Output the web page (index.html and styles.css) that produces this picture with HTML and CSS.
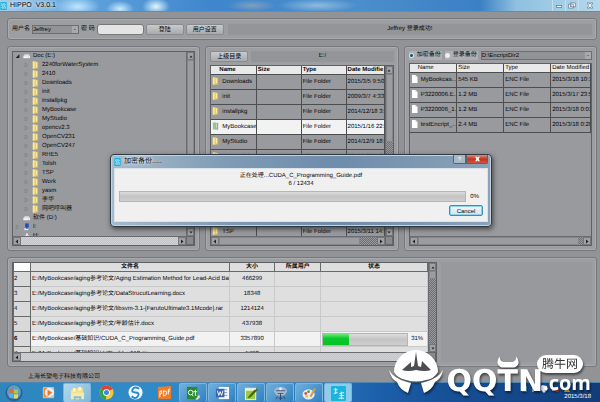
FILE: index.html
```
<!DOCTYPE html>
<html lang="zh-CN">
<head>
<meta charset="utf-8">
<title>HIPPO V3.0.1</title>
<link rel="stylesheet" href="styles.css">
</head>
<body>
<svg class="defs" aria-hidden="true">
  <defs>
    <symbol id="app" viewBox="0 0 16 20"><rect width="16" height="20" rx="2" fill="#1cb3dc"/><path d="M4 3v6l3 2v6M12 17v-6L9 9V3M3 13l2 3M13 7l-2-3" fill="none" stroke="#e9fbff" stroke-width="2"/></symbol>
    <symbol id="folder" viewBox="0 0 14 18"><path d="M1 1h7v16H1z" fill="#f0d97a"/><path d="M7 2h6v15H7z" fill="#e2c04e"/><path d="M8 1v12l2 3V4z" fill="#fff3b8"/><path d="M1 1h3v16H1z" fill="#f7e9a4"/></symbol>
    <symbol id="folder-on" viewBox="0 0 14 18"><path d="M1 1h7v16H1z" fill="#9cc3a0"/><path d="M7 2h6v15H7z" fill="#86ae8b"/><path d="M8 1v12l2 3V4z" fill="#c8e2c9"/></symbol>
    <symbol id="file" viewBox="0 0 12 16"><path d="M1 0h7l4 4v12H1z" fill="#fff"/><path d="M8 0v4h4" fill="#d5d7db"/></symbol>
    <symbol id="drive" viewBox="0 0 16 12"><path d="M1 6l3-4h9l3 4v4H1z" fill="#dcdee0"/><path d="M1 7h15v4H1z" fill="#f4f5f6"/><circle cx="13" cy="9" r="1" fill="#6f8f74"/></symbol>
    <symbol id="arrow" viewBox="0 0 8 8"><path d="M2 1l4 3-4 3z" fill="#a9aaad" stroke="#707276"/></symbol>
    <symbol id="arrow-open" viewBox="0 0 8 8"><path d="M7 1v6H1z" fill="#222"/></symbol>
    <symbol id="up" viewBox="0 0 8 8"><path d="M1 6l3-4 3 4z"/></symbol>
    <symbol id="down" viewBox="0 0 8 8"><path d="M1 2l3 4 3-4z"/></symbol>
    <symbol id="left" viewBox="0 0 8 8"><path d="M6 0L1 4l5 4z"/></symbol>
    <symbol id="right" viewBox="0 0 8 8"><path d="M2 0l5 4-5 4z"/></symbol>
  </defs>
</svg>

<header class="titlebar">
  <svg class="app-icon"><use href="#app"/></svg>
  <span class="caption">HIPPO&nbsp; V3.0.1</span>
  <div class="window-buttons">
    <button aria-label="最小化"><svg viewBox="0 0 12 10"><rect x="2" y="5" width="8" height="3" fill="#fff" stroke="#566b80"/></svg></button>
    <button aria-label="还原"><svg viewBox="0 0 12 10"><path d="M4 1h7v6H4zM1 3h7v6H1z" fill="#fff" stroke="#566b80"/><path d="M3 6h3" stroke="#566b80"/></svg></button>
    <button aria-label="关闭" class="wide"><svg viewBox="0 0 12 10"><path d="M2 1h3l1 2 1-2h3L8 5l2 4H7L6 7 5 9H2l2-4z" fill="#fff" stroke="#566b80"/></svg></button>
  </div>
</header>

<main class="window">
  <section class="panel toolbar">
    <label for="user">用户名</label>
    <select id="user" class="user"><option>Jeffrey</option></select>
    <label for="pwd">密 码</label>
    <input id="pwd" type="password">
    <button class="btn wide-btn">登陆</button>
    <button class="btn wide-btn">用户设置</button>
    <output class="well">Jeffrey 登录成功!</output>
  </section>

  <div class="columns">
    <section class="panel">
      <div class="pane">
        <ul class="tree">
          <li><svg class="tw"><use href="#arrow-open"/></svg><svg class="ic"><use href="#drive"/></svg>Doc (E:)
            <ul>
              <li><svg class="tw"><use href="#arrow"/></svg><svg class="ic"><use href="#folder"/></svg>2240forWaterSystem</li>
              <li><svg class="tw"><use href="#arrow"/></svg><svg class="ic"><use href="#folder"/></svg>2410</li>
              <li><svg class="tw"><use href="#arrow"/></svg><svg class="ic"><use href="#folder"/></svg>Downloads</li>
              <li><svg class="tw"><use href="#arrow"/></svg><svg class="ic"><use href="#folder"/></svg>init</li>
              <li><svg class="tw"><use href="#arrow"/></svg><svg class="ic"><use href="#folder"/></svg>installpkg</li>
              <li><svg class="tw"><use href="#arrow"/></svg><svg class="ic"><use href="#folder"/></svg>MyBookcase</li>
              <li><svg class="tw"><use href="#arrow"/></svg><svg class="ic"><use href="#folder"/></svg>MyStudio</li>
              <li><svg class="tw"><use href="#arrow"/></svg><svg class="ic"><use href="#folder"/></svg>opencv2.3</li>
              <li><svg class="tw"><use href="#arrow"/></svg><svg class="ic"><use href="#folder"/></svg>OpenCV231</li>
              <li><svg class="tw"><use href="#arrow"/></svg><svg class="ic"><use href="#folder"/></svg>OpenCV247</li>
              <li><svg class="tw"><use href="#arrow"/></svg><svg class="ic"><use href="#folder"/></svg>RHE5</li>
              <li><svg class="tw"><use href="#arrow"/></svg><svg class="ic"><use href="#folder"/></svg>Tolsh</li>
              <li><svg class="tw"><use href="#arrow"/></svg><svg class="ic"><use href="#folder"/></svg>TSP</li>
              <li><svg class="tw"><use href="#arrow"/></svg><svg class="ic"><use href="#folder"/></svg>Work</li>
              <li><svg class="tw"><use href="#arrow"/></svg><svg class="ic"><use href="#folder"/></svg>yasm</li>
              <li><svg class="tw"><use href="#arrow"/></svg><svg class="ic"><use href="#folder"/></svg>李华</li>
              <li><svg class="tw"><use href="#arrow"/></svg><svg class="ic"><use href="#folder"/></svg>网吧呼叫器</li>
            </ul>
          </li>
          <li><svg class="tw"></svg><svg class="ic"><use href="#drive"/></svg>软件 (D:)</li>
          <li><svg class="tw"><use href="#arrow"/></svg><svg class="ic" viewBox="0 0 14 18"><path d="M4 1h8v9H4z" fill="#1c4fb4"/><path d="M2 12h9v4H2z" fill="#e4e8f0"/><path d="M6 9h4v4H6z" fill="#2b62c9"/></svg>I:</li>
          <li><svg class="tw"></svg><svg class="ic" viewBox="0 0 14 18"><path d="M6 3h4v5h3v9H3V8h3z" fill="#e8e9eb"/></svg>H:</li>
        </ul>
        <div class="vbar"><i><svg><use href="#up"/></svg></i><b></b><i><svg><use href="#down"/></svg></i></div>
        <div class="hbar light"><i><svg><use href="#left"/></svg></i><b></b><i><svg><use href="#right"/></svg></i></div>
        <div class="corner"></div>
      </div>
    </section>

    <section class="panel">
      <div class="row">
        <button class="btn wide-btn">上级目录</button>
        <output class="well">E:/</output>
      </div>
      <div class="pane">
        <div class="view">
          <table class="files bold">
            <thead><tr><th>Name</th><th>Size</th><th>Type</th><th>Date Modifie</th></tr></thead>
            <tbody>
              <tr><td><svg class="ic"><use href="#folder"/></svg>Downloads</td><td></td><td>File Folder</td><td>2015/3/5 9:50</td></tr>
              <tr><td><svg class="ic"><use href="#folder"/></svg>init</td><td></td><td>File Folder</td><td>2009/3/7 4:33</td></tr>
              <tr><td><svg class="ic"><use href="#folder"/></svg>installpkg</td><td></td><td>File Folder</td><td>2014/12/18 3:</td></tr>
              <tr class="on"><td><svg class="ic"><use href="#folder-on"/></svg>MyBookcase</td><td></td><td>File Folder</td><td>2015/1/16 22:</td></tr>
              <tr><td><svg class="ic"><use href="#folder"/></svg>MyStudio</td><td></td><td>File Folder</td><td>2014/12/9 18:</td></tr>
              <tr><td><svg class="ic"><use href="#folder"/></svg>opencv2.3</td><td></td><td>File Folder</td><td>2014/12/9 18:</td></tr>
              <tr><td><svg class="ic"><use href="#folder"/></svg>OpenCV231</td><td></td><td>File Folder</td><td>2014/12/9 18:</td></tr>
              <tr><td><svg class="ic"><use href="#folder"/></svg>OpenCV247</td><td></td><td>File Folder</td><td>2014/12/9 18:</td></tr>
              <tr><td><svg class="ic"><use href="#folder"/></svg>RHE5</td><td></td><td>File Folder</td><td>2014/12/9 18:</td></tr>
              <tr><td><svg class="ic"><use href="#folder"/></svg>Tolsh</td><td></td><td>File Folder</td><td>2014/12/9 18:</td></tr>
              <tr><td><svg class="ic"><use href="#folder"/></svg>TSP</td><td></td><td>File Folder</td><td>2015/3/11 14:</td></tr>
            </tbody>
          </table>
        </div>
        <div class="vbar"><i><svg><use href="#up"/></svg></i><b class="part"></b><i><svg><use href="#down"/></svg></i></div>
        <div class="hbar"><i><svg><use href="#left"/></svg></i><b class="part"></b><i><svg><use href="#right"/></svg></i></div>
        <div class="corner"></div>
      </div>
    </section>

    <section class="panel">
      <div class="row tight">
        <label class="radio"><input type="radio" name="mode" checked>加密备份</label>
        <label class="radio"><input type="radio" name="mode">登录备份</label>
        <select aria-label="目录" class="grow"><option>D:\EncriptDir2</option></select>
      </div>
      <div class="pane single">
        <div class="view">
          <table class="files">
            <thead><tr><th>Name</th><th>Size</th><th>Type</th><th>Date Modified</th></tr></thead>
            <tbody>
              <tr><td><svg class="ic"><use href="#file"/></svg>MyBookcas...</td><td>545 KB</td><td>ENC File</td><td>2015/3/18 10:13.</td></tr>
              <tr><td><svg class="ic"><use href="#file"/></svg>P3220006.E...</td><td>1.2 MB</td><td>ENC File</td><td>2015/3/17 23:53.</td></tr>
              <tr><td><svg class="ic"><use href="#file"/></svg>P3220006_1...</td><td>1.2 MB</td><td>ENC File</td><td>2015/3/18 0:01:2</td></tr>
              <tr><td><svg class="ic"><use href="#file"/></svg>testEncript_...</td><td>2.4 MB</td><td>ENC File</td><td>2015/3/18 0:20:0</td></tr>
            </tbody>
          </table>
        </div>
        <div class="hbar"><i><svg><use href="#left"/></svg></i><b class="most"></b><i><svg><use href="#right"/></svg></i></div>
      </div>
    </section>
  </div>

  <section class="panel queue">
    <div class="pane">
      <div class="view">
        <table class="jobs">
          <thead><tr><th class="n"></th><th class="path">文件名</th><th class="size">大小</th><th class="owner">所属用户</th><th>状态</th></tr></thead>
          <tbody>
            <tr><th>2</th><td>E:/MyBookcase/aging参考论文/Aging Estimation Method for Lead-Acid Batt...</td><td>466299</td><td></td><td></td></tr>
            <tr><th>3</th><td>E:/MyBookcase/aging参考论文/DataStrucutLearning.docx</td><td>18348</td><td></td><td></td></tr>
            <tr><th>4</th><td>E:/MyBookcase/aging参考论文/libsvm-3.1-[FarutoUltimate3.1Mcode].rar</td><td>1214124</td><td></td><td></td></tr>
            <tr><th>5</th><td>E:/MyBookcase/aging参考论文/年龄估计.docx</td><td>437938</td><td></td><td></td></tr>
            <tr class="on"><th>6</th><td>E:/MyBookcase/基础知识/CUDA_C_Programming_Guide.pdf</td><td>3357890</td><td></td><td><div class="meter"><progress value="31" max="100" aria-label="状态"></progress>31%</div></td></tr>
            <tr><th>7</th><td>E:/MyBookcase/基础知识/dd0build_v613.zip</td><td>5793</td><td></td><td></td></tr>
          </tbody>
        </table>
      </div>
      <div class="vbar"><i><svg><use href="#up"/></svg></i><b class="thumb"></b><i><svg><use href="#down"/></svg></i></div>
      <div class="hbar light"><i><svg><use href="#left"/></svg></i><b></b><i><svg><use href="#right"/></svg></i></div>
      <div class="corner"></div>
    </div>
    <div class="blank"></div>
  </section>

  <p class="status">上海长望电子科技有限公司</p>
</main>

<footer class="taskbar">
  <button class="start" aria-label="开始"><svg viewBox="0 0 18 18"><circle cx="9" cy="9" r="8.5" fill="#2d5f8f"/><circle cx="9" cy="8" r="7" fill="#5c9cc8"/><path d="M4 5q2-1 4 0v4q-2-1-4 0z" fill="#e8683a"/><path d="M9 5q2 1 4 0v4q-2 1-4 0z" fill="#9ccc4a"/><path d="M4 10q2-1 4 0v4q-2-1-4 0z" fill="#4fb4ee"/><path d="M9 10q2 1 4 0v4q-2 1-4 0z" fill="#f8d448"/></svg></button>
  <div class="apps">
    <button aria-label="播放器"><svg viewBox="0 0 16 16"><rect x="2" y="2" width="12" height="12" rx="1" fill="#b9c4cc"/><rect x="3" y="3" width="9" height="10" fill="#f08c3c"/><circle cx="9" cy="8" r="5" fill="#e9eef2"/><path d="M7 5l5 3-5 4z" fill="#ee7420"/></svg></button>
    <button class="open pale" aria-label="资源管理器"><svg viewBox="0 0 16 16"><path d="M1 4h5l1-2h7v12H1z" fill="#f4dc84"/><path d="M3 2h3v4H3zM9 1h3v4H9z" fill="#fff6cf"/><path d="M1 7h14v7H1z" fill="#f7e9a6"/><path d="M4 11h8v4h-2v-2H6v2H4z" fill="#7fc0e4"/></svg></button>
    <button aria-label="Chrome"><svg viewBox="0 0 16 16"><circle cx="8" cy="8" r="7.5" fill="#f7c92c"/><path d="M8 8L1.5 4.2A7.500 7.500 0 0 1 14.500 4.300z" fill="#dc4436"/><path d="M8 8l-6.500-3.800A7.500 7.500 0 0 0 7.500 15.500z" fill="#35a250"/><circle cx="8" cy="8" r="3.600" fill="#fff"/><circle cx="8" cy="8" r="2.700" fill="#3d84e0"/></svg></button>
    <button aria-label="浏览器"><svg viewBox="0 0 16 16"><circle cx="8" cy="8" r="7.500" fill="#f3f8fc"/><path d="M12 4Q7 1 5 4.500T8 8t2.500 4T4 12" fill="none" stroke="#2588d2" stroke-width="2"/></svg></button>
    <button aria-label="PDF"><svg viewBox="0 0 16 16"><path d="M1 2l14-1v14H1z" fill="#ee7c2b"/><path d="M3 13V7l2-1v3l-2 1M7 12V6l3 1v3zM12 10V5l2-1M12 7l2-1" fill="none" stroke="#fff"/></svg></button>
    <button class="open" aria-label="Qt"><svg viewBox="0 0 16 16"><path d="M1 1h11v13H1z" fill="#278a2c"/><circle cx="5" cy="7" r="2.500" fill="none" stroke="#fff"/><path d="M6 9l2 2M10 4v6h1M8 6h4" stroke="#fff" fill="none"/><path d="M10 14l4-5 1 3-3 3z" fill="#d9ddd5"/></svg></button>
    <button class="open" aria-label="Word"><svg viewBox="0 0 16 16"><path d="M4 1h11v13H4z" fill="#f4f7fb"/><path d="M6 4h7M6 7h7M6 10h7" stroke="#7c9ccc"/><path d="M1 3h9v9H1z" fill="#3b62ae"/><path d="M2.500 5l1.500 5 1.500-4L7 10l1.500-5" fill="none" stroke="#fff"/></svg></button>
    <button class="open" aria-label="编辑器"><svg viewBox="0 0 16 16"><path d="M1 2h12v13H1z" fill="#f2f5e8"/><path d="M2 5h10v9H2z" fill="#9bcc38"/><path d="M5 11l8-9 2 2-8 8-3 1z" fill="#48621e"/><path d="M1 2h12v2H1z" fill="#e4e9ea"/></svg></button>
    <button class="open" aria-label="工具"><svg viewBox="0 0 16 16"><path d="M1 6q0-5 7-5t7 5l-3 4H4z" fill="#a9b8cc"/><path d="M3 5h10M5 8h6" stroke="#485c80"/><path d="M8 8v7M5 11l-2 3M11 11l2 3M6 13h4" stroke="#36445f" fill="none"/><circle cx="8" cy="3" r="1.500" fill="#eef"/></svg></button>
    <button class="open" aria-label="画图"><svg viewBox="0 0 16 16"><ellipse cx="7" cy="9" rx="6.500" ry="5.500" fill="#e6edf2"/><circle cx="4" cy="8" r="1.500" fill="#e04a3c"/><circle cx="7" cy="6" r="1.500" fill="#48a34c"/><circle cx="5" cy="11" r="1.500" fill="#f0c23c"/><path d="M8 11l5-9 2 1-5 9z" fill="#d89a48"/></svg></button>
    <button class="open active" aria-label="HIPPO"><svg viewBox="0 0 16 16"><rect width="16" height="16" rx="1" fill="#1cb3dc"/><path d="M3 4h4M5 2v6M3 8l4-1M9 8l5-1M11 6v8M8 13h6M9 10h5" stroke="#e9fbff" fill="none"/></svg></button>
  </div>
  <div class="tray">
    <svg viewBox="0 0 50 8"><rect x="1" y="1" width="5" height="6" fill="#34b0d4"/><path d="M12 1v6" stroke="#e8f2fb"/><path d="M21 0l5 1v4l-3 3-3-3V1z" fill="#dfeaf7"/><path d="M31 2h6v4h-6z" fill="#c9d5df"/><circle cx="36" cy="5" r="2" fill="#d53a30"/><path d="M43 7l3-6 3 6z" fill="#ecc444"/></svg>
    <time>2015/3/18</time>
  </div>
</footer>

<div class="dialog" role="dialog" aria-labelledby="dlg-title">
  <div class="dialog-bar">
    <svg class="app-icon"><use href="#app"/></svg>
    <span id="dlg-title" class="caption">加密备份.....</span>
    <div class="dialog-buttons">
      <button aria-label="帮助">?</button>
      <button class="close" aria-label="关闭"><svg viewBox="0 0 12 10"><path d="M2 1h3l1 2 1-2h3L8 5l2 4H7L6 7 5 9H2l2-4z" fill="#fff"/></svg></button>
    </div>
  </div>
  <div class="dialog-body">
    <p>正在处理...CUDA_C_Programming_Guide.pdf<br>6 / 12434</p>
    <div class="meter"><progress value="0" max="100" aria-label="进度"></progress>0%</div>
    <button class="cancel">Cancel</button>
  </div>
</div>

<div class="brand">
  <svg class="emblem" viewBox="0 0 54 46">
    <path d="M5 24a22 22 0 1 1 44 0q-4 7-12 8-10 3-20 0Q8 30 5 24z" fill="#fff"/>
    <path d="M0 22q4 8 18 12l4 1-3 10Q11 42 8 34 2 31 0 22z" fill="#fff"/>
    <path d="M54 22q-4 8-18 12l-4 1 3 10q8-3 11-11 6-3 8-12z" fill="#fff"/>
    <path d="M27 4l2 14 3 1 1-6 9 9q-6 2-15 0-8 2-14 0l9-8v5l3-1z" fill="#4c4d50"/>
  </svg>
  <span class="name">QQ<span class="horned">T<svg class="horns" viewBox="0 0 24 13"><path d="M3 0Q-3 8 5 12h14q8-4 2-12 0 5-4 6H7Q3 5 3 0z" fill="#fff"/></svg></span>N</span><span class="dot">.com</span>
  <span class="pill">腾牛网</span>
</div>
</body>
</html>
```
FILE: styles.css
```
* { box-sizing: border-box; }

body {
  margin: 0;
  height: 100vh;
  display: flex;
  flex-direction: column;
  position: relative;
  overflow: hidden;
  background: #929396;
  color: #060607;
  font: 6px/9px "Liberation Sans", "Noto Sans CJK SC", sans-serif;
  text-rendering: geometricPrecision;
}

button, input, select { font: inherit; color: inherit; margin: 0; padding: 0; min-width: 0; }
ul, p { margin: 0; padding: 0; list-style: none; }
.defs { position: absolute; width: 0; height: 0; }

/* Title bar */
.titlebar {
  flex: none;
  height: 12px;
  display: flex;
  align-items: center;
  gap: 3px;
  border-bottom: 1px solid #75879a;
  background:
    radial-gradient(ellipse 22px 10px at 13% 60%, #bfe6ff, transparent),
    radial-gradient(ellipse 14px 8px at 20% 80%, #c9ecff, transparent),
    radial-gradient(ellipse 14px 9px at 26% 60%, #e2f6ff, transparent),
    radial-gradient(ellipse 24px 6px at 42% 50%, #7f9fbe, transparent),
    radial-gradient(ellipse 40px 7px at 53% 50%, #8ebbe0, transparent),
    linear-gradient(90deg, #a5cdea 0, #5fa3dc 14%, #3f86cc 35%, #4b8ecb 60%, #3a80c4 80%, #8fc0e0 86%, #b4d9ec);
}
.app-icon { flex: none; width: 7px; height: 8px; }
.caption { font-size: 7px; text-shadow: 0 0 3px #fff, 0 0 4px #fff; }
.window-buttons { margin-left: auto; display: flex; align-self: stretch; }
.window-buttons button { width: 13px; border: 0; border-left: 1px solid #c5dfee; background: none; display: grid; place-items: center; }
.window-buttons .wide { width: 22px; }
.window-buttons svg { width: 8px; height: 7px; }

/* Main window */
.window {
  flex: 1;
  min-height: 0;
  display: flex;
  flex-direction: column;
  gap: 6px;
  padding: 6px 3px 0 7px;
}
.panel {
  min-width: 0;
  min-height: 0;
  display: flex;
  flex-direction: column;
  gap: 3px;
  padding: 4px;
  border: 1px solid #77787b;
  border-radius: 3px;
  background: #9d9ea1;
  box-shadow: inset 0 0 0 1px #a9aaad;
}
.toolbar { flex: none; flex-direction: row; align-items: center; gap: 2px; height: 22px; }
.columns { flex: 206; min-height: 0; display: grid; grid-template-columns: repeat(3, minmax(0, 1fr)); grid-template-rows: minmax(0, 1fr); gap: 5px; }
.queue { flex: 100; flex-direction: row; gap: 4px; }
.row { flex: none; display: flex; gap: 3px; height: 11px; }
.tight { height: 9px; align-items: center; }

.btn {
  border: 1px solid #8a8b8d;
  border-radius: 2px;
  background: linear-gradient(#c9cacc, #a9aaac);
  text-align: center;
  white-space: nowrap;
}
.wide-btn { width: 38px; height: 11px; }
.well { flex: 1; height: 11px; background: #949598; text-align: center; line-height: 11px; }
.toolbar .well { margin-left: 2px; }
.toolbar select { width: 47px; height: 9px; }
.toolbar input { width: 47px; height: 11px; border: 1px solid #777; border-radius: 3px; background: #e4e4e5; }
.toolbar label { white-space: pre; }
select {
  appearance: none;
  height: 9px;
  border: 1px solid #6d6e71;
  border-radius: 0;
  background: linear-gradient(#77787b, #77787b) right 2px center / 2px 1px no-repeat, linear-gradient(#a8a9ac, #a8a9ac) right / 6px 100% no-repeat, #929396;
  line-height: 7px;
}
.grow { flex: 1; }
.radio { display: flex; align-items: center; gap: 3px; background: #aeafb2; padding-right: 1px; height: 9px; white-space: nowrap; }
.radio input { appearance: none; width: 5px; height: 5px; border-radius: 50%; background: #eee; }
.radio input:checked { background: radial-gradient(#155a70 1px, #d5e6ec 2px); }

/* Scrollable panes */
.pane {
  flex: 1;
  min-width: 0;
  min-height: 0;
  display: grid;
  grid-template-columns: minmax(0, 1fr) 8px;
  grid-template-rows: minmax(0, 1fr) 9px;
  border: 1px solid #5f6063;
  background: #999a9d;
}
.single { grid-template-columns: minmax(0, 1fr); }
.view { overflow: hidden; min-height: 0; }
.vbar, .hbar {
  display: flex;
  border: 0 solid #6b6c6f;
  background: repeating-conic-gradient(#6e6f72 0 25%, #98999c 0 50%) 0 0 / 2px 2px;
}
.vbar { flex-direction: column; border-left-width: 1px; }
.hbar { border-top-width: 1px; }
.vbar i, .hbar i { flex: none; width: 8px; height: 8px; border: 1px solid #77787b; background: #a0a1a4; display: grid; place-items: center; }
.vbar i { width: auto; }
.vbar svg, .hbar svg { width: 4px; height: 5px; fill: #222; }
.vbar b, .hbar b { flex: 1; background: #9b9ca0; border: 1px solid #85868a; }
.vbar .part { flex: none; height: 40%; margin-bottom: auto; }
.hbar .part { flex: none; width: 81%; margin-right: auto; }
.hbar .most { flex: none; width: 89%; margin-right: auto; }
.vbar .thumb { flex: none; height: 8px; margin-bottom: auto; }
.light b { background: repeating-conic-gradient(#c2c3c5 0 25%, #d2d3d5 0 50%) 0 0 / 2px 2px; border: 0; }
.corner { background: #88898c; border: 1px solid #66676a; }

/* Folder tree */
.tree { overflow: hidden; padding-left: 2px; white-space: nowrap; }
.tree ul { padding-left: 9px; }
.tw { width: 5px; }
.ic { width: 7px; height: 8px; margin-right: 3px; vertical-align: middle; }
.tree .ic, .tree .tw { height: 8px; margin-right: 3px; vertical-align: top; }

/* Tables */
table { width: 100%; table-layout: fixed; border-collapse: collapse; }
th, td { padding: 0 1px; overflow: hidden; white-space: nowrap; text-overflow: clip; }
.files th { width: 26%; height: 8px; text-align: left; font-weight: 400; background: #e9e9ea; border-right: 1px solid #4d4e50; line-height: 8px; }
.files th:last-child { width: auto; }
.files th:first-child { padding-left: 8px; }
.files.bold th { font-weight: 700; }
.files td { height: 15px; border: 1px solid #4d4e50; border-left: 0; }
.on { background: #f2f2f2; }
.jobs { background: #dfdfe0; }
.jobs thead th { height: 8px; line-height: 8px; background: #dededf; border: 1px solid #68696b; border-top: 0; text-align: center; }
.jobs .n { width: 17px; background: #fff; }
.jobs .path { width: 48%; }
.jobs .size, .jobs .owner { width: 11%; }
.jobs td { height: 15px; border: 1px solid #c8c9cb; text-align: center; }
.jobs td:nth-child(2) { text-align: left; }
.jobs tbody th { text-align: left; font-weight: 400; background: #d9d9da; border: 1px solid #68696b; padding: 0; }
.jobs .on { background: #f2f2f2; }
.jobs tbody .on th { font-weight: 700; }
.blank { flex: 0 0 26%; background: #98999c; }
.status { flex: none; height: 9px; padding-left: 21px; }

/* Progress */
.meter { display: flex; align-items: center; gap: 3px; }
progress { appearance: none; flex: 1; min-width: 0; height: 11px; border: 1px solid #b5b5b6; background: #c8c8c9; }
progress::-webkit-progress-bar { background: linear-gradient(#dcdcdd, #c4c4c5 50%, #cfcfd0); }
progress::-webkit-progress-value { background: linear-gradient(#6be878, #0bc92b 40%, #07c426); }
.jobs .meter { padding-right: 3px; }
.jobs progress { height: 13px; }

/* Dialog */
.dialog {
  position: absolute;
  top: 154px;
  left: 110px;
  right: 108px;
  padding: 0 3px 4px;
  border: 1px solid #2f3a45;
  border-radius: 4px;
  background: linear-gradient(90deg, #a6bccd, #7f9bb5 30%, #6e8cab 60%, #8ba3b8);
  box-shadow: inset 0 0 0 1px #c3d2de, 1px 2px 5px #222b;
}
.dialog-bar { height: 13px; display: flex; align-items: center; gap: 3px; }
.dialog-buttons { margin-left: auto; display: flex; align-self: flex-start; }
.dialog-buttons button { width: 13px; height: 9px; border: 1px solid #536474; border-top: 0; border-radius: 0 0 0 2px; background: #a9b8c5; color: #fff; line-height: 8px; display: grid; place-items: center; }
.dialog-buttons .close { width: 22px; border-radius: 0 0 2px 0; background: linear-gradient(#dd8d80, #c4331f 50%, #d0553f); }
.dialog-buttons svg { width: 7px; height: 6px; }
.dialog-body { display: flex; flex-direction: column; gap: 3px; padding: 3px 4px 5px; border: 1px solid #dbe3ea; background: #f0f0f0; line-height: 8px; }
.dialog-body p { text-align: center; }
.dialog-body .meter { padding-right: 4px; gap: 4px; }
.cancel { align-self: flex-end; width: 34px; height: 11px; border: 1px solid #3c8fb4; border-radius: 2px; background: linear-gradient(#f2f7fa, #d3e3ec); box-shadow: inset 0 0 0 1px #8bd3ee; }

/* Taskbar */
.taskbar {
  flex: none;
  height: 20px;
  display: flex;
  align-items: stretch;
  border-top: 1px solid #4f86b0;
  background: linear-gradient(90deg, #2f86bd, #2f8bc8 25%, #2a7dc0 50%, #1d62ac 62%, #17529a 72%, #123c78);
}
.taskbar button { border: 0; background: none; display: grid; place-items: center; }
.start { width: 27px; }
.start svg { width: 18px; height: 18px; }
.apps { flex: 0 0 53%; display: grid; grid-template-columns: repeat(11, 1fr); margin-left: 7px; gap: 1px; }
.apps svg { width: 15px; height: 15px; }
.apps .open { border: 1px solid #7db6dc; border-bottom: 0; border-radius: 2px; background: linear-gradient(135deg, #6fb0dc, #2f80c0); }
.apps .pale { background: linear-gradient(135deg, #b4d9ec, #7db9dc); }
.apps .active { background: #8fcbea; }
.tray { margin-left: auto; width: 92px; padding: 2px 9px 0 0; display: flex; flex-direction: column; align-items: flex-end; color: #fff; line-height: 8px; }
.tray svg { width: 50px; height: 8px; margin-right: 20px; }

/* Watermark over the desktop */
.brand { position: absolute; right: 9px; bottom: 8px; height: 46px; display: flex; align-items: flex-end; color: #fff; filter: drop-shadow(1px 2px 1px #0008); }
.emblem { width: 54px; height: 46px; margin-right: 3px; }
.name { font: 700 30px/24px "DejaVu Sans", sans-serif; }
.horned { position: relative; }
.horns { position: absolute; left: 0; top: -8px; width: 22px; height: 13px; }
.dot { font: 700 20px/22px "Open Sans", sans-serif; }
.pill { position: absolute; right: 8px; top: 7px; padding: 0 5px; border-radius: 9px; background: #fff; color: #333; font: 12px/18px "Noto Sans CJK SC", sans-serif; }
```
